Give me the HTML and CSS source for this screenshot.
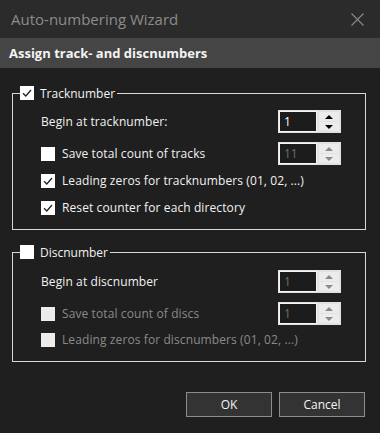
FILE: index.html
```html
<!DOCTYPE html>
<html>
<head>
<meta charset="utf-8">
<link rel="stylesheet" href="styles.css">
</head>
<body>
<div class="window">
  <div class="titlebar">
    <span class="title">Auto-numbering Wizard</span>
    <svg class="close" width="13" height="13" viewBox="0 0 13 13"><path d="M0.5 0.5 L12.5 12.5 M12.5 0.5 L0.5 12.5" stroke="#8a8a8a" stroke-width="1.1" fill="none"/></svg>
  </div>
  <div class="header">Assign track- and discnumbers</div>
  <div class="content">
    <fieldset class="group g1">
      <legend class="legend"><span class="cb checked"><svg viewBox="0 0 14 14"><path d="M3 7.2 L5.8 10 L11 4" stroke="#222" stroke-width="1.3" fill="none"/></svg></span><span class="lt">Tracknumber</span></legend>
      <div class="row r1"><span class="label">Begin at tracknumber:</span>
        <div class="spin"><span class="val">1</span><div class="btns"><span class="b"><i class="up"></i></span><span class="b"><i class="down"></i></span></div></div>
      </div>
      <div class="row r2"><span class="cb"></span><span class="label">Save total count of tracks</span>
        <div class="spin dis"><span class="val">11</span><div class="btns"><span class="b"><i class="up"></i></span><span class="b"><i class="down"></i></span></div></div>
      </div>
      <div class="row r3"><span class="cb checked"><svg viewBox="0 0 14 14"><path d="M3 7.2 L5.8 10 L11 4" stroke="#222" stroke-width="1.3" fill="none"/></svg></span><span class="label">Leading zeros for tracknumbers (01, 02, ...)</span></div>
      <div class="row r4"><span class="cb checked"><svg viewBox="0 0 14 14"><path d="M3 7.2 L5.8 10 L11 4" stroke="#222" stroke-width="1.3" fill="none"/></svg></span><span class="label">Reset counter for each directory</span></div>
    </fieldset>
    <fieldset class="group g2">
      <legend class="legend"><span class="cb"></span><span class="lt">Discnumber</span></legend>
      <div class="row r1"><span class="label">Begin at discnumber</span>
        <div class="spin dis"><span class="val">1</span><div class="btns"><span class="b"><i class="up"></i></span><span class="b"><i class="down"></i></span></div></div>
      </div>
      <div class="row r2"><span class="cb dcb"></span><span class="label dl">Save total count of discs</span>
        <div class="spin dis"><span class="val">1</span><div class="btns"><span class="b"><i class="up"></i></span><span class="b"><i class="down"></i></span></div></div>
      </div>
      <div class="row r3b"><span class="cb dcb"></span><span class="label dl">Leading zeros for discnumbers (01, 02, ...)</span></div>
    </fieldset>
    <div class="buttons">
      <button class="btn">OK</button>
      <button class="btn">Cancel</button>
    </div>
  </div>
</div>
</body>
</html>
```
FILE: styles.css
```css
html, body { margin: 0; padding: 0; background: #1f1f1f; }
body { font-family: "Open Sans", "Noto Sans", sans-serif; font-size: 12px; color: #f2f2f2; }
.window { width: 380px; height: 433px; background: #1f1f1f; overflow: hidden; }
.titlebar { height: 38px; background: #2b2b2b; display: flex; align-items: center; justify-content: space-between; padding: 0 16px 0 11px; box-sizing: border-box; }
.title { font-size: 15px; color: #8c8c8c; }
.close { display: block; }
.header { height: 30px; background: #454545; display: flex; align-items: center; padding-left: 9px; font-weight: bold; font-size: 13px; color: #f4f4f4; }
.content { padding: 0 14px 0 12px; }
.group { border: 1px solid #d8d8d8; margin: 0; padding: 0 24px 10px 28px; min-width: 0; }
.g1 { margin-top: 17px; }
.g2 { margin-top: 14px; }
.legend { padding: 0 2px 0 0; margin-left: -21px; display: flex; align-items: center; gap: 6px; height: 16px; }
.lt { color: #f2f2f2; }
.cb { width: 14px; height: 14px; background: #fff; display: inline-block; flex: none; }
.cb svg { width: 14px; height: 14px; display: block; }
.dcb { background: #ececec; }
.row { display: flex; align-items: center; height: 23px; letter-spacing: 0.1px; }
.row .cb { margin-right: 7px; }
.label { flex: 1; }
.dl { color: #8a8a8a; }
.g1 .r1 { margin-top: 9px; }
.g1 .r2 { margin-top: 9px; }
.g1 .r3 { margin-top: 4px; }
.g1 .r4 { margin-top: 4px; }
.g2 .r1 { margin-top: 10px; }
.g2 .r2 { margin-top: 9px; }
.g2 .r3b { margin-top: 3px; }
.spin { display: flex; width: 63px; height: 23px; box-sizing: border-box; border: 1px solid #e2e2e2; background: #e2e2e2; letter-spacing: 0; }
.val { width: 38px; background: #1c1c1c; border: 1px solid #f5f5f5; box-sizing: border-box; padding-left: 4px; line-height: 19px; color: #fff; font-size: 12px; }
.spin.dis .val { color: #6e6e6e; }
.btns { flex: 1; display: flex; flex-direction: column; padding: 1px 1px 1px 2px; gap: 1px; }
.b { flex: 1; background: #ececec; display: flex; align-items: center; justify-content: center; }
.up { width: 0; height: 0; border-left: 4px solid transparent; border-right: 4px solid transparent; border-bottom: 4px solid #000; }
.down { width: 0; height: 0; border-left: 4px solid transparent; border-right: 4px solid transparent; border-top: 4px solid #000; }
.dis .up { border-bottom-color: #8a8a8a; }
.dis .down { border-top-color: #8a8a8a; }
.buttons { display: flex; justify-content: flex-end; gap: 7px; margin-top: 30px; padding-right: 1px; }
.btn { width: 86px; height: 25px; background: #333; border: 1px solid #8c8c8c; color: #f4f4f4; font-family: "Open Sans", "Noto Sans", sans-serif; font-size: 12px; padding: 0; }
```
